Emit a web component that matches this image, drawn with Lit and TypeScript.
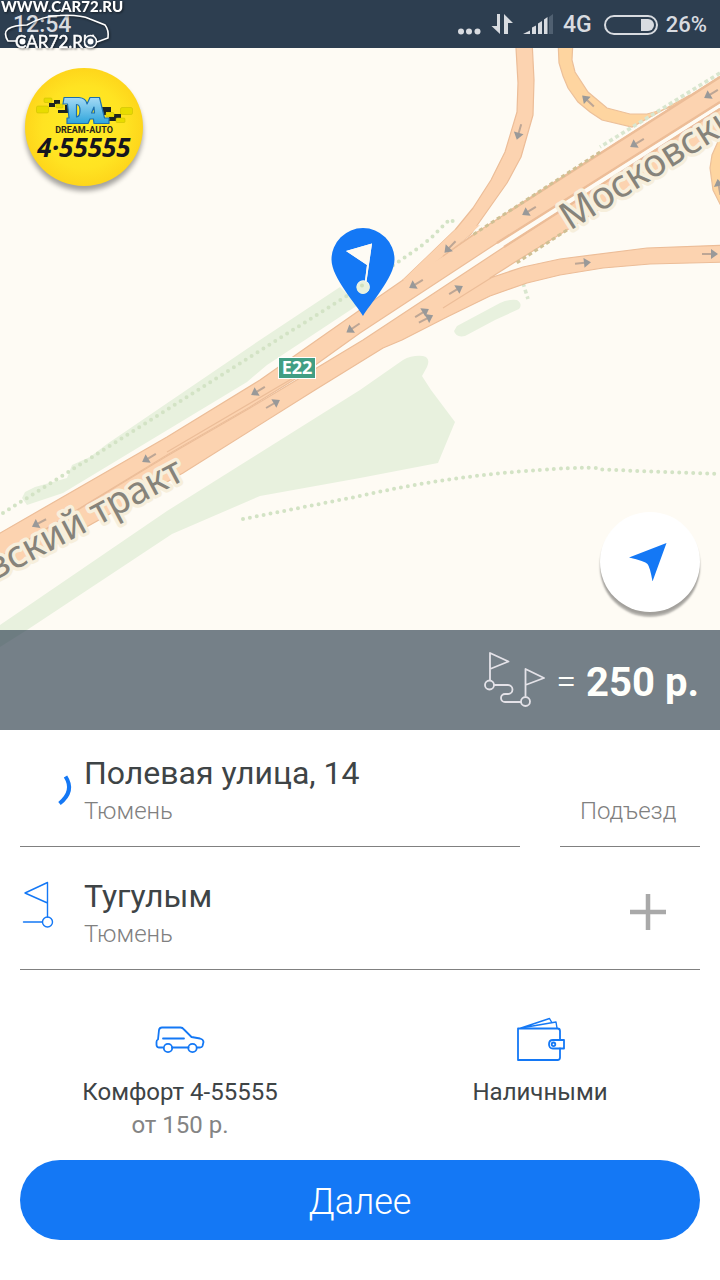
import { LitElement, html, css, svg } from "lit";
import { customElement, property } from "lit/decorators.js";

/* [x, y, heading in degrees] of every one-way arrow on the roads */
const ARROWS: [number, number, number][] = [
  [711, 94, 149], [637, 143, 149], [529, 211, 149], [450, 247, 134],
  [416, 284, 149], [353, 328, 146], [258, 391, 149], [149, 458, 149],
  [39, 523, 152], [519, 132, 106], [588, 101, 223], [456, 290, -31],
  [422, 313, -31], [426, 319, -27], [273, 404, -30], [583, 263, -6],
  [710, 254, 0], [719, 187, -100],
];

@customElement("city-map")
class CityMap extends LitElement {
  static styles = css`
    :host { display: block; overflow: hidden; background: #fefbf4; }
    svg { display: block; width: 100%; height: 100%; }
    .green { fill: #e8f1de; }
    .road { fill: #fcd3b0; stroke: #ecbd98; stroke-width: 1.2; stroke-linejoin: round; }
    .loop { fill: #fed5a0; stroke: #ecc09a; stroke-width: 1.2; }
    .seam { fill: none; stroke: #ecbd98; stroke-width: 1.2; }
    .edge { fill: none; stroke: #ecbd98; stroke-width: 2.4; }
    .dots { fill: none; stroke: #d3e3c5; stroke-width: 4; stroke-linecap: round; stroke-dasharray: 0 7; }
    .dash { fill: none; stroke: #d9e6cf; stroke-width: 3.6; stroke-dasharray: 4 3; }
    .olive { fill: none; stroke: #d0c094; stroke-width: 3; stroke-dasharray: 4 3; }
    .arrow line { stroke: #bda695; stroke-width: 2; }
    .arrow path { fill: #999; }
    .street {
      font: 38px "Noto Sans", sans-serif; fill: #86837a;
      stroke: #f7efdc; stroke-width: 7; stroke-linejoin: round; paint-order: stroke;
    }
    .shield { font: bold 18px "Noto Sans", sans-serif; fill: #fff; text-anchor: middle; }
  `;

  render() {
    return html`<svg viewBox="0 48 720 682" preserveAspectRatio="xMidYMid slice" role="img" aria-label="Карта">
      <g class="green">
        <path d="M22 498 25 492 35 487 67 478 72 465 90 457 107 444 260 340 340 287 358 305 305 340 267 365 247 382 63 493 27 505Z" />
        <path d="M0 625 167 511 360 390 403 360Q412 355 423 356 431 358 427 367L422 376 431 390 455 422 438 463 360 478 260 496 172 534 27 630 0 647Z" />
        <path d="M457 326 500 303Q508 299 517 300 523 304 519 309L495 320 465 336Q456 338 454 331Z" />
      </g>
      <path class="dots" d="M3 513 27 498 70 471 277 340 345 297 398 262 420 247 432 237 450 219 458 225" />
      <path class="dots" d="M243 519 360 496Q440 478 520 471.500T600 469.500L720 474" />
      <path class="dash" d="M523 283 528 299" />

      <path class="loop" d="M558 40 559 63 563 76 568 88 578 102 590 112 602 120 632 127 690 95 677 105 662 110 647 114 630 114 607 108 588 92 575 72 572 60 573 40Z" />
      <path class="loop" d="M730 125 720 137 712 155 710 168 713 190 722 208 730 208Z" />
      <path class="dash" d="M720 73 600 147" />
      <path class="road" d="M516 40 516 48 518 83 517 112 505 152 491 180 473 208 455 230 403 280 443 256 471 234 483 217 507 183 521 157 533 115 534 80 532 40Z" />
      <path class="road" d="M730 70 471 236 443 256 403 280 377 298 260 380 167 437-5 536-5 560 167 455 250 407 300 376 360 333 497 243 730 96Z" />
      <path d="M403 280 455 230 480 225 465 239 443 256 410 282Z" fill="#fcd3b0" />
      <path class="road" d="M730 102 504 247 363 340 300 378 250 408 167 456-5 560-5 578 183 473 315 390 383 348 402 340 447 317 490 296 527 283 560 275 603 268 650 264 730 262 730 245 647 248 560 259 523 267 490 278 515 262 567 230 730 126Z" />
      <path class="seam" d="M443 256 475 234M443 308 494 276M167 452 300 374" />
      <path class="edge" d="M720 77 510 211M720 102 497 243M720 109 504 247" />
      <path class="olive" d="M600 152 471 236M567 230 515 264" />
      ${ARROWS.map(
        ([x, y, a]) => svg`<g class="arrow" transform="translate(${x} ${y}) rotate(${a})">
          <line x1="-8" x2="4" y1="0" y2="0" /><path d="M1-5 8 0 1 5Z" /></g>`
      )}
      <text class="street" transform="translate(570 231) rotate(-32)">Московский тракт</text>
      <text class="street" text-anchor="end" transform="translate(186 479) rotate(-28)">Московский тракт</text>
      <rect x="278.500" y="357.500" width="37" height="21" fill="#419e83" stroke="#fff" />
      <text class="shield" x="297" y="374">E22</text>

      <path fill="#1478f5" fill-rule="evenodd" d="M363 316C357 305 331.500 278 331.500 259.500A31.500 31.500 0 0 1 394.500 259.500C394.500 278 369 305 363 316ZM346 251 367 265 365 280.500A6.600 6.600 0 1 0 366.600 281.200L372 243.500Z" />
      <path fill="#fefbf4" d="M346 251 367 265 365 281 366.500 281 372 243.500Z" />
      <path fill="#e8f1de" d="M369.500 287.500A6.500 6.500 0 1 1 356.500 287.500 6.500 6.500 0 0 1 369.500 287.500" />
      <circle cx="362" cy="285.500" r="2" fill="#d0e0be" />
    </svg>`;
  }
}

@customElement("status-bar")
class StatusBar extends LitElement {
  static styles = css`
    :host {
      display: flex; align-items: center; justify-content: space-between;
      position: relative; height: 48px; padding: 2px 13px 0; box-sizing: border-box;
      background: #2d3e50; color: #d8dbe0; font: 500 23px/46px Roboto, sans-serif;
    }
    .right { display: flex; align-items: center; gap: 10px; }
    .percent { font-size: 22px; }
    .battery { margin-left: 2px; margin-right: -2px; }
    svg { display: block; }
    .mark { position: absolute; left: 0; top: 0; z-index: 2; }
    .url { font: 900 15px Lato, sans-serif; fill: #fff; }
    .brand { font: 17px Lato, sans-serif; fill: #fff; stroke: #fff; stroke-width: .5; }
    .mark svg { filter: drop-shadow(1px 1px 1px #0008); }
  `;

  render() {
    return html`
      <span>12:54</span>
      <span class="right">
        <svg width="96" height="24" viewBox="0 0 96 24" fill="#d8dbe0" aria-hidden="true">
          <circle cx="4" cy="18.500" r="3" /><circle cx="12" cy="18.500" r="3" /><circle cx="20.500" cy="18.500" r="3" />
          <path d="M40 1h3v20L34.500 13H40ZM47 1 56 10h-5v11h-4Z" />
          <path d="M66 21 73 17.500V21ZM75 14.500 79 12.500V21H75ZM81 10.500 85 8V21H81ZM87 6.500 90.500 4V21H87Z" />
          <path d="M92 4 96 1V21H92Z" fill="#506071" />
        </svg>
        <span>4G</span>
        <svg class="battery" width="54" height="20" viewBox="0 0 54 20" aria-hidden="true">
          <rect x="1" y="1" width="52" height="18" rx="9" fill="none" stroke="#d8dbe0" stroke-width="2" />
          <path d="M37 4h7a6 6 0 0 1 0 12h-7Z" fill="#d8dbe0" />
        </svg>
        <span class="percent">26%</span>
      </span>
      <div class="mark">
        <svg width="130" height="54" viewBox="0 0 130 54" role="img" aria-label="CAR72.RU">
          <text class="url" x="1" y="12">WWW.CAR72.RU</text>
          <path d="M16 41H8Q3 33 8 29 14 25 27 25 42 16 60 15.500 80 14.500 90 19L105 25Q109 30 108 38L97 42" fill="none" stroke="#fff" stroke-width="1.600" />
          <text class="brand" x="15" y="48">CAR72.RU</text>
          <circle cx="22.500" cy="41.500" r="3" fill="#fff" />
          <circle cx="90.500" cy="41.500" r="6" fill="#2d3e50" stroke="#fff" stroke-width="1.500" />
          <circle cx="90.500" cy="41.500" r="3" fill="#fff" />
        </svg>
      </div>`;
  }
}

@customElement("ride-option")
class RideOption extends LitElement {
  @property() label = "";
  @property() note = "";

  static styles = css`
    :host { display: block; }
    button {
      display: flex; flex-direction: column; align-items: center; width: 100%;
      padding: 0; border: 0; background: none; color: #3e4446; cursor: pointer;
      font: 24px/33px Roboto, sans-serif;
    }
    .icon { height: 48px; margin-bottom: 12px; }
    .note { color: #848484; }
  `;

  render() {
    return html`<button type="button">
      <span class="icon"><slot></slot></span>
      <span>${this.label}</span>
      ${this.note ? html`<span class="note">${this.note}</span>` : null}
    </button>`;
  }
}

@customElement("app-root")
class AppRoot extends LitElement {
  static styles = css`
    :host {
      display: flex; flex-direction: column; min-height: 100vh;
      background: #fff; color: #3e4446; font-family: Roboto, sans-serif;
    }
    button, input { font-family: inherit; }
    button { cursor: pointer; }
    svg { display: block; }
    .stage { position: relative; flex: 1; display: flex; flex-direction: column; justify-content: flex-end; min-height: 400px; }
    city-map { position: absolute; inset: 0; }
    .logo { position: absolute; left: 20px; top: 16px; }
    .locate {
      position: absolute; right: 20px; bottom: 118px; width: 100px; height: 100px;
      display: grid; place-items: center; padding: 0 4px 0 0; border: 0; border-radius: 50%;
      background: #fff; box-shadow: 0 5px 2px #0004, 0 3px 2px #0002;
    }
    .dream { font: bold 9px Roboto, sans-serif; fill: #2b2718; text-anchor: middle; }
    .phone { font: italic bold 26px "Open Sans", sans-serif; fill: #15151f; text-anchor: middle; }
    .price {
      position: relative; display: flex; align-items: center; justify-content: flex-end; gap: 10px;
      height: 100px; padding: 4px 21px 0; box-sizing: border-box; background: rgba(45, 62, 80, .655);
      color: #fffffb; font-size: 36px; font-weight: 300;
    }
    .trip { margin-bottom: 6px; }
    .price strong { font-size: 40px; font-weight: 700; }
    .route { display: grid; gap: 6px; padding: 0 20px; }
    .row { display: grid; grid-template-columns: 1fr 140px; gap: 40px; }
    .cell { display: flex; border-bottom: 1px solid #808080; padding: 23px 0 19px; }
    .wide { grid-column: 1 / -1; }
    .lead { width: 64px; flex: none; }
    .address { flex: 1; padding: 0; border: 0; background: none; text-align: left; color: #3e4446; }
    .title { display: block; font-size: 32px; line-height: 40px; margin-bottom: 2px; }
    .town { display: block; font-size: 24px; font-weight: 300; line-height: 32px; color: #808080; }
    .entrance { align-items: flex-end; }
    .entrance input {
      width: 100%; height: 32px; padding: 0 0 0 20px; border: 0; outline: 0; background: none;
      box-sizing: border-box; font-size: 24px; font-weight: 300; color: #808080;
    }
    .entrance input::placeholder { color: #808080; opacity: 1; }
    .add { align-self: center; margin: 0 34px 2px 0; padding: 0; border: 0; background: none; }
    .options { display: grid; grid-template-columns: 1fr 1fr; padding: 46px 0 18px; }
    .line { fill: none; stroke: #1478f5; stroke-width: 1.8; stroke-linejoin: round; stroke-linecap: round; }
    .thin { stroke-width: 1.4; }
    .next {
      margin: 0 20px 40px; height: 80px; padding: 4px 0 0; border: 0; border-radius: 40px;
      background: #1478f5; color: #fff; font-size: 36px; font-weight: 300;
    }
  `;

  render() {
    return html`
      <status-bar></status-bar>
      <section class="stage">
        <city-map></city-map>
        <svg class="logo" width="130" height="134" viewBox="20 64 130 134" role="img" aria-label="Dream-Auto">
          <defs>
            <radialGradient id="sun"><stop offset="0" stop-color="#ffee25" /><stop offset=".7" stop-color="#ffe322" /><stop offset="1" stop-color="#fed61b" /></radialGradient>
            <linearGradient id="ice" x1="0" y1="0" x2="0" y2="1"><stop offset="0" stop-color="#a5daf5" /><stop offset="1" stop-color="#2ea5dc" /></linearGradient>
            <filter id="soft"><feGaussianBlur stdDeviation="2.500" /></filter>
          </defs>
          <circle cx="84" cy="132" r="59" fill="#000" opacity=".35" filter="url(#soft)" />
          <circle cx="84" cy="127" r="59" fill="url(#sun)" />
          <path fill="#1d2420" d="M49 103h5v-3h6v4h-5v3h-6ZM58 110h7v-5h4v8h-11ZM102 107h9v5h-5v3h-4ZM111 117h3v-3h7v4h-3v3h-9v-4Z" />
          <g fill="#e8dc00" stroke="#c4ba00" stroke-width=".5">
            <rect x="44" y="98" width="8" height="4.500" rx="1" /><rect x="36.500" y="106" width="12" height="7" rx="1.500" />
            <rect x="56" y="104" width="7" height="4" rx="1" /><rect x="120.500" y="107.500" width="12" height="7" rx="1.500" />
            <rect x="116" y="118" width="9" height="4.500" rx="1" /><rect x="106" y="112.500" width="8" height="4" rx="1" />
          </g>
          <path d="M64 97.500H79Q86 98 87 104L90 97.500H99.500L104.500 118H109V123.500H94L93.500 119H90L88 123.500H67V118H69L67.500 104H63ZM76.500 104.500V117Q80 116.500 80 110.500T76.500 104.500ZM91.500 113H94.500L94 107Z" fill="url(#ice)" fill-rule="evenodd" stroke="#1c6fad" stroke-width="1.200" stroke-linejoin="round" />
          <text class="dream" x="84" y="133">DREAM-AUTO</text>
          <text class="phone" x="84" y="157">4·55555</text>
        </svg>
        <button class="locate" type="button" aria-label="Моё местоположение">
          <svg width="38" height="38" viewBox="0 0 38 38"><path d="M37.500 0 23.500 38.500Q21 24 18.500 21T0 14.500Z" fill="#1478f5" /></svg>
        </button>
        <div class="price">
          <svg class="trip" width="62" height="56" viewBox="0 0 62 56" fill="none" stroke="#e4e2e8" stroke-width="1.800" stroke-linejoin="round" aria-hidden="true">
            <path d="M6 29V2L24.500 10.500 6 18M41.500 45V18L60 27 41.500 34M10 34H24a4.500 4.500 0 0 1 0 9H21a4 4 0 0 0 0 8H37" />
            <circle cx="5.500" cy="34" r="4.500" /><circle cx="41.500" cy="50.500" r="4.500" />
          </svg>
          <span>=</span>
          <strong>250 р.</strong>
        </div>
      </section>

      <section class="route">
        <div class="row">
          <div class="cell">
            <span class="lead">
              <svg width="64" height="74" viewBox="0 0 64 74" aria-hidden="true"><path d="M45.500 23.500Q55 38 39.500 50.500" fill="none" stroke="#1478f5" stroke-width="4" /></svg>
            </span>
            <button class="address" type="button">
              <span class="title">Полевая улица, 14</span><span class="town">Тюмень</span>
            </button>
          </div>
          <label class="cell entrance"><input type="text" placeholder="Подъезд" aria-label="Подъезд" /></label>
        </div>
        <div class="row">
          <div class="cell wide">
            <span class="lead">
              <svg class="line thin" width="64" height="74" viewBox="0 0 64 74" aria-hidden="true">
                <path d="M27.500 41V6.500L5 17 27.500 27M3.500 46H22" /><circle cx="27.500" cy="46" r="5" />
              </svg>
            </span>
            <button class="address" type="button">
              <span class="title">Тугулым</span><span class="town">Тюмень</span>
            </button>
            <button class="add" type="button" aria-label="Добавить адрес">
              <svg width="36" height="36" viewBox="0 0 36 36"><path d="M18 0V36M0 18H36" stroke="#a9a9a9" stroke-width="4.500" /></svg>
            </button>
          </div>
        </div>
      </section>

      <section class="options">
        <ride-option label="Комфорт 4-55555" note="от 150 р.">
          <svg class="line" width="50" height="48" viewBox="0 0 50 48" aria-hidden="true">
            <path d="M7.500 31.500H3.500Q1.500 31 1.500 28.500V26Q1.500 24 3 23.500L4 14Q4.500 11.500 7 11.500H25.500Q27.500 11.500 29 13.500L36.500 21 45 22.500Q48.500 23.500 48.500 26L47.500 30Q47 31.500 45 31.500H42.500M17 31.500H33.500M8 22.500H29" />
            <circle cx="13" cy="32" r="4.200" /><circle cx="37.500" cy="32" r="4.200" />
          </svg>
        </ride-option>
        <ride-option label="Наличными">
          <svg class="line" width="50" height="48" viewBox="0 0 50 48" aria-hidden="true">
            <path d="M45 24V15Q45 12.500 42.500 12.500H3V44H42.500Q45 44 45 41.500V32.500" />
            <path class="thin" d="M6 12 34.500 2.500 36.500 6M6 12 41 6 42 12" />
            <path d="M49 24H38Q34 24 34 28.300T38 32.500H49Z" /><circle cx="38.500" cy="28.300" r="1.800" />
          </svg>
        </ride-option>
      </section>
      <button class="next" type="button">Далее</button>
    `;
  }
}
